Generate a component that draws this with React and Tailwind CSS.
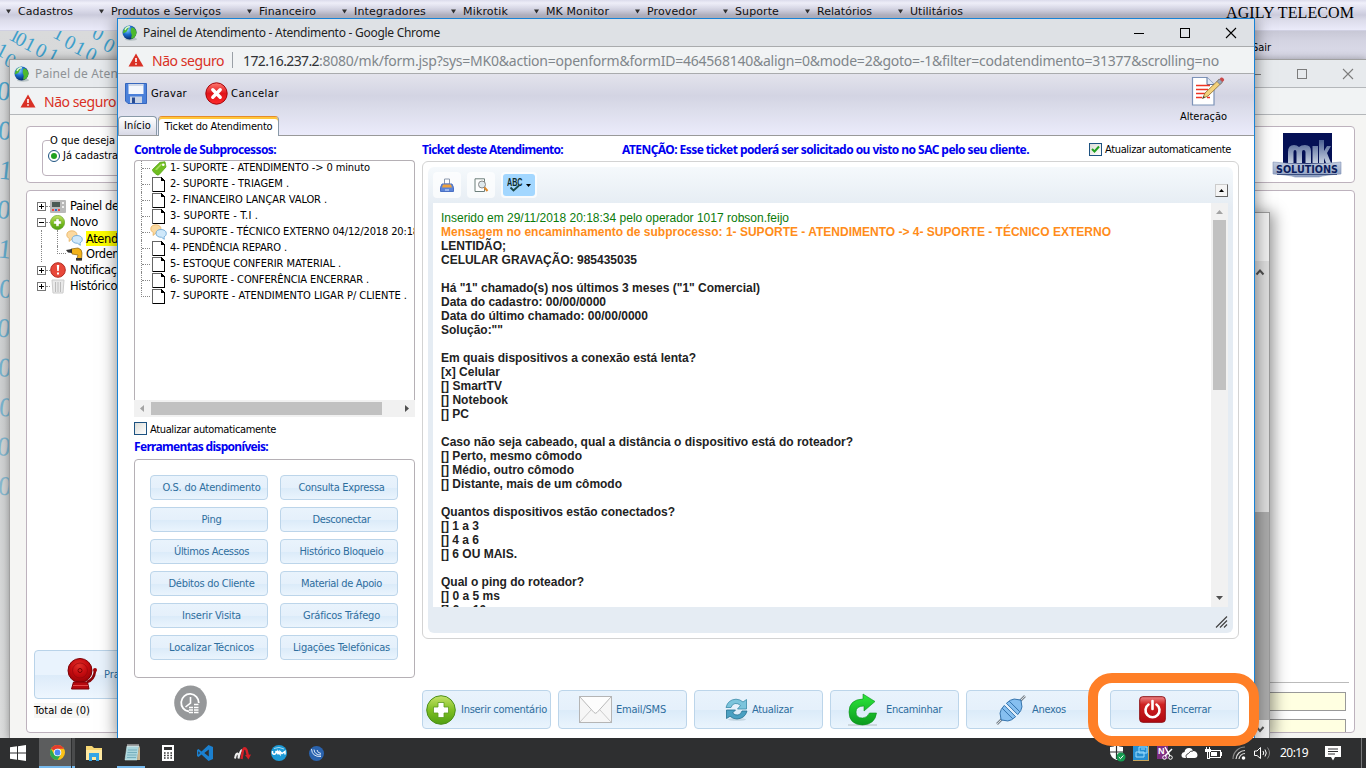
import React, { useLayoutEffect, useRef, useState } from "react";

const TAHOMA = "font-['DejaVu_Sans_Condensed','DejaVu_Sans',sans-serif] text-[11px]";
const TAHOMA_BOLD = "font-['Noto_Sans','Open_Sans',sans-serif] text-[12px] font-bold";
const VERDANA = "font-['DejaVu_Sans',sans-serif]";
const SEGOE = "font-['Noto_Sans','Open_Sans',sans-serif]";
const ARIAL = "font-['Liberation_Sans',Arial,sans-serif]";

/* Text tracked so that it fills exactly w pixels. */
function Fit({ w, className = "", children }) {
  const ref = useRef(null);
  const [track, setTrack] = useState(0);
  useLayoutEffect(() => {
    const natural = ref.current.getBoundingClientRect().width;
    setTrack((w - natural) / String(children).length);
  }, []);
  return (
    <span ref={ref} className={"inline-block whitespace-pre shrink-0 " + className} style={{ letterSpacing: track + "px" }}>
      {children}
    </span>
  );
}

const Globe = () => (
  <svg width="16" height="16" viewBox="0 0 16 16" className="shrink-0">
    <defs>
      <radialGradient id="gl" cx="35%" cy="30%" r="75%">
        <stop offset="0" stopColor="#8fd0ff" />
        <stop offset="0.45" stopColor="#1c6fd0" />
        <stop offset="1" stopColor="#04215e" />
      </radialGradient>
    </defs>
    <ellipse cx="9" cy="14.2" rx="6" ry="1.6" fill="#9aa" opacity="0.6" />
    <circle cx="7.5" cy="7.5" r="7" fill="url(#gl)" />
    <path d="M1 8.500C1 4 4 1 8 .8C7.500 2.500 6 3 5.500 5S3 7.500 1 8.500ZM9.500 2.500C12 2 14.500 5 14.500 8C14 11 12 13.500 9.500 14C8.500 12 10.500 10.500 9.500 9S8.500 5 9.500 2.500Z" fill="#4db82e" />
    <path d="M3 5C4 2.500 6 1.500 8 1.800" stroke="#fff" strokeWidth="1.300" fill="none" opacity="0.8" />
  </svg>
);

const Warn = () => (
  <svg width="16" height="14" viewBox="0 0 16 14" className="shrink-0">
    <path d="M8 0.500L15.500 13.500H0.500Z" fill="#d93025" />
    <path d="M7.200 5h1.600v4H7.200zM7.200 10.200h1.600v1.600H7.200z" fill="#fff" />
  </svg>
);

const WinButtons = ({ color }) => (
  <svg width="104" height="12" viewBox="0 0 104 12" className="shrink-0" fill="none" stroke={color} shapeRendering="crispEdges">
    <path d="M0 6.500H10" />
    <rect x="46.500" y="1.500" width="9" height="9" />
    <path d="M92 1L102 11M102 1L92 11" shapeRendering="auto" strokeWidth="1.100" />
  </svg>
);

const Bubbles = () => (
  <svg width="17" height="16" viewBox="0 0 17 16" className="shrink-0">
    <path d="M.8 5C.8 2 3 .8 6 .8S11 2.500 11 5S8.500 9 6 9L3 11.500L3.300 8.500C1.800 7.800 .8 6.500 .8 5Z" fill="#fbd9a0" stroke="#e9b25f" strokeWidth="0.800" />
    <path d="M6 9.300C6 6.800 8 5.500 11 5.500S16.300 7 16.300 9.400C16.300 11 15.300 12.300 14 12.800L14.300 15.300L11.500 13.300C8 13.300 6 11.800 6 9.300Z" fill="#cfe8fa" stroke="#6fa9d6" strokeWidth="0.900" />
  </svg>
);

const Page = () => (
  <svg width="14" height="16" viewBox="0 0 14 16" className="shrink-0" shapeRendering="crispEdges">
    <path d="M.5 15.500V1.500H9L12.500 5V15.500Z" fill="#fff" stroke="#666" />
    <path d="M9 1h1v1h1v1h1v1h1v12H1v-1h11V5H9Z" fill="#000" />
  </svg>
);

const Tag = () => (
  <svg width="15" height="15" viewBox="0 0 15 15" className="shrink-0">
    <path d="M.5 8.500L8 1.300L13 .8L14 6L7 13.700Q5.500 14.700 4 13.200L1 10.500Q.1 9.500 .5 8.500Z" fill="#6fbe20" stroke="#5aa61a" strokeWidth="0.800" />
    <path d="M3 8.500L8.500 3L11 2.500L5 9Z" fill="#a5dc5f" />
    <circle cx="11.300" cy="3.800" r="1.300" fill="#fff" />
  </svg>
);

const Expander = ({ open }) => (
  <svg width="9" height="9" viewBox="0 0 9 9" className="shrink-0" shapeRendering="crispEdges">
    <rect x=".5" y=".5" width="8" height="8" fill="#fff" stroke="#777" />
    <path d={open ? "M2 4.500H7" : "M2 4.500H7M4.500 2V7"} stroke="#000" />
  </svg>
);

const PlusBall = ({ s }) => (
  <svg width={s} height={s} viewBox="0 0 30 30" className="shrink-0">
    <defs>
      <linearGradient id="pb" x1="0" y1="0" x2="0" y2="1">
        <stop offset="0" stopColor="#c5e36a" />
        <stop offset="0.5" stopColor="#7fbf22" />
        <stop offset="1" stopColor="#4f9f12" />
      </linearGradient>
    </defs>
    <circle cx="15" cy="15" r="14.300" fill="url(#pb)" stroke="#4c8f1a" strokeWidth="1" />
    <path d="M12 7.500h6V12h4.500v6H18v4.500h-6V18H7.500v-6H12z" fill="#fff" stroke="#5b9a20" strokeWidth="0.800" />
  </svg>
);

const menu = [
  ["Cadastros", 6, 18, 55],
  ["Produtos e Serviços", 99, 111, 110],
  ["Financeiro", 247, 259, 57],
  ["Integradores", 342, 354, 72],
  ["Mikrotik", 451, 463, 45],
  ["MK Monitor", 534, 546, 63],
  ["Provedor", 635, 647, 50],
  ["Suporte", 723, 735, 44],
  ["Relatórios", 805, 817, 55],
  ["Utilitários", 898, 910, 53],
];

function TopBar() {
  return (
    <header className="w-[1366px]">
      <div className="flex h-[31px] items-start border-b border-[#d0d0e2] bg-[linear-gradient(#dcdcec_0px,#f0f0fa_3px,#dedeed_9px,#cbcbdc_15px,#dcdcea_20px,#ebebfa_30px)]">
        {menu.map(([t, ax, x, w], i) => {
          const prev = i ? menu[i - 1][2] + menu[i - 1][3] : 0;
          return (
            <div key={t} className="flex h-[25px] shrink-0 items-center" style={{ marginLeft: ax - prev }}>
              <span className="flex shrink-0 pb-[2px]" style={{ width: x - ax }}>
                <svg width="5" height="5" viewBox="0 0 5 5"><path d="M0 .5H5L2.500 4.500Z" fill="#333" /></svg>
              </span>
              <Fit w={w} className={VERDANA + " text-[11px] text-[#111]"}>{t}</Fit>
            </div>
          );
        })}
        <div className="ml-auto mr-3 flex h-[26px] items-center font-['Liberation_Serif',serif] text-[16px] text-black">
          <Fit w={128}>AGILY TELECOM</Fit>
        </div>
      </div>
      <div className="ml-[1240px] flex h-[28px] items-center bg-[linear-gradient(#c8c8d6,#d4d4e2_10px,#dcdcea)] pl-[12px]">
        <Fit w={19} className={TAHOMA + " pt-[6px] text-black"}>Sair</Fit>
      </div>
    </header>
  );
}

const binary = [
  [15, 5, "1"], [21, 9, "0"], [30, 14, "1"], [41, 20, "0"], [53, 25, "1"],
  [59, 3, "1"], [70, 12, "0"], [80, 18, "1"], [91, 24, "0"],
  [98, 3, "0"], [109, 15, "0"], [2, 20, "1"], [10, 30, "0"],
];
const stripDigits = ["0", "0", "1", "0", "1", "0", "0", "0", "0", "0", "0"];

function Wallpaper() {
  return (
    <svg width="120" height="707" viewBox="0 0 120 707" className="absolute left-0 top-[31px]">
      <defs>
        <linearGradient id="wp" x1="0" y1="0" x2="0" y2="1">
          <stop offset="0" stopColor="#d9dadb" />
          <stop offset="0.5" stopColor="#cdcfd0" />
          <stop offset="1" stopColor="#dcdddd" />
        </linearGradient>
      </defs>
      <rect width="120" height="707" fill="url(#wp)" />
      <g fontFamily="Liberation Serif, serif" textAnchor="middle" fill="#3f9fcb">
        {binary.map(([x, y, d], i) => (
          <text key={i} x={x} y={y + 6} transform={`rotate(27 ${x} ${y})`} fontSize="20">{d}</text>
        ))}
        {stripDigits.map((d, i) => (
          <text key={"s" + i} x={4 + (i % 3)} y={69 + i * 39.500} transform={`rotate(6 4 ${60 + i * 39.500})`} fontSize="27" opacity={0.9 - i * 0.04}>{d}</text>
        ))}
      </g>
    </svg>
  );
}

const Logo = () => (
  <svg width="70" height="46" viewBox="0 0 70 46" className="shrink-0">
    <defs>
      <linearGradient id="mk" x1="0" y1="0" x2="0" y2="1">
        <stop offset="0" stopColor="#4a5f92" />
        <stop offset="1" stopColor="#c5cfe0" />
      </linearGradient>
      <linearGradient id="mk2" x1="0" y1="0" x2="0" y2="1">
        <stop offset="0" stopColor="#c3cde0" />
        <stop offset="1" stopColor="#8b9cbe" />
      </linearGradient>
    </defs>
    <path d="M11 1H60V32H11Z" fill="#041055" />
    <path d="M16 31V20Q16 13 22 13Q25 13 27 15Q29 13 33 13Q39 13 39 19V31H33.500V20Q33.500 18 31.500 18Q30 18 30 20V31H24.500V20Q24.500 18 23 18Q21.500 18 21.500 20V31ZM40.500 14H46V31H40.500ZM47 8H52V19L55 14H59L55 21L59 31H54L52 26V31H47Z" fill="url(#mk)" />
    <path d="M1 30Q35 34 69 30V42Q52 43 47 45H23Q18 43 1 42Z" fill="url(#mk2)" stroke="#8292b5" strokeWidth="0.600" />
    <text x="35" y="40.500" textAnchor="middle" textLength="62" lengthAdjust="spacingAndGlyphs" fontFamily="DejaVu Sans, sans-serif" fontWeight="bold" fontSize="10" fill="#0b1c5c">SOLUTIONS</text>
    <path d="M5 42.500H65" stroke="#24386f" strokeWidth="0.800" />
  </svg>
);

const Bell = () => (
  <svg width="31" height="33" viewBox="0 0 31 33" className="shrink-0">
    <defs>
      <radialGradient id="bell" cx="45%" cy="30%" r="70%">
        <stop offset="0" stopColor="#e0302a" />
        <stop offset="0.5" stopColor="#c60c10" />
        <stop offset="1" stopColor="#9a0206" />
      </radialGradient>
    </defs>
    <path d="M28 13Q27 22 20 24" stroke="#8a0408" strokeWidth="2.500" fill="none" />
    <circle cx="28" cy="12" r="2" fill="#a3060a" />
    <circle cx="13" cy="12.500" r="12" fill="url(#bell)" stroke="#7c0206" />
    <circle cx="13" cy="12.500" r="7.500" fill="none" stroke="#8f060a" opacity="0.6" />
    <circle cx="13" cy="12.500" r="2" fill="#d81c1c" stroke="#700" />
    <path d="M6.500 24H20.500L22 31H4.500Z" fill="#b5090e" stroke="#7c0206" />
    <path d="M6 27.500H21" stroke="#e24a4a" />
  </svg>
);

function BackTree() {
  const row = "flex h-4 items-center";
  const txt = VERDANA + " text-[11.500px] tracking-[-0.400px] pt-px text-black whitespace-nowrap";
  const dots = <span className="w-[4px] shrink-0 border-t border-dotted border-[#888]" />;
  return (
    <div className="pl-[10px] pt-[7px]">
      <div className={row}>
        <Expander />{dots}
        <svg width="16" height="13" viewBox="0 0 16 13" className="shrink-0"><rect width="16" height="13" rx="1" fill="#b9b9b9" /><rect x="2" y="2" width="8" height="5" fill="#4a5a54" /><path d="M2 9h2v2H2zM8 9h2v2H8z" fill="#e44" /><path d="M5 9h2v2H5z" fill="#36c" /><path d="M12 2h2v2h-2zM12 6h2v2h-2z" fill="#eee" /></svg>
        <span className={txt + " ml-1"}>Painel de</span>
      </div>
      <div className={row}>
        <Expander open />{dots}<PlusBall s={15} />
        <span className={txt + " ml-[5px]"}>Novo</span>
      </div>
      <div className={row + " pl-[4px]"}>
        <span className="h-4 w-4 shrink-0 border-l border-dotted border-[#888]" />
        <span className="h-4 w-[9px] shrink-0 border-l border-dotted border-[#888]" />
        <Bubbles />
        <span className={txt + " ml-[3px] bg-[#ffff00] leading-[14px]"}>Atendimento</span>
      </div>
      <div className={row + " pl-[4px]"}>
        <span className="h-4 w-4 shrink-0 border-l border-dotted border-[#888]" />
        <span className="mb-2 h-2 w-[9px] shrink-0 border-b border-l border-dotted border-[#888]" />
        <svg width="17" height="14" viewBox="0 0 17 14" className="shrink-0"><path d="M5 2L12 1Q16 2 16 6L15.500 13H10.500L12 8L6 7Z" fill="#f2b21b" stroke="#8a6410" strokeWidth=".7" /><path d="M0 3L6 2V6L2 5.500ZM10 11h6v2.500h-6z" fill="#333" /></svg>
        <span className={txt + " ml-[3px]"}>Ordem</span>
      </div>
      <div className={row}>
        <Expander />{dots}
        <svg width="16" height="16" viewBox="0 0 16 16" className="shrink-0"><circle cx="8" cy="8" r="7.300" fill="#e8483a" stroke="#b42a20" /><path d="M6.800 3h2.400L8.800 9H7.200ZM7 10.500h2v2H7z" fill="#fff" /></svg>
        <span className={txt + " ml-1"}>Notificações</span>
      </div>
      <div className={row}>
        <Expander />{dots}
        <svg width="16" height="16" viewBox="0 0 16 16" className="shrink-0"><path d="M2 2H14L13 15H3Z" fill="#e9e9e9" stroke="#ccc" /><path d="M5.500 4V14M8 4V14M10.500 4V14" stroke="#bbb" /></svg>
        <span className={txt + " ml-1"}>Histórico</span>
      </div>
    </div>
  );
}

function BackWindow() {
  return (
    <section className="absolute left-[9px] top-[59px] flex h-[680px] w-[1358px] flex-col border border-[#a0a0a0] bg-[#f5f5f3] shadow-[0_0_8px_rgba(0,0,0,0.35)]">
      <div className="flex h-[28px] shrink-0 items-center border-b border-[#b4b7ba] bg-[#e7eaed] pl-[4px]">
        <Globe />
        <span className={SEGOE + " ml-[5px] text-[12px] tracking-[0.150px] text-[#8e9296]"}>Painel de Atendimento</span>
        <span className="ml-auto mr-[11px]"><WinButtons color="#7c7c7c" /></span>
      </div>
      <div className="flex h-[27px] shrink-0 items-center border-b border-[#b4b7ba] bg-[#f1f3f4] pl-[10px]">
        <Warn />
        <Fit w={72} className={SEGOE + " ml-[8px] text-[14px] text-[#d93025]"}>Não seguro</Fit>
      </div>
      <div className="ml-[16px] mt-[11px] flex h-[57px] w-[1329px] shrink-0 items-center justify-between rounded border border-[#bdb2bd] bg-white pr-[12px]">
        <fieldset className={TAHOMA + " ml-[15px] h-[43px] w-[300px] rounded border border-[#bdb2bd] px-[5px] text-black"}>
          <legend className="ml-[2px] h-[14px] leading-[16px]">O que deseja fazer?</legend>
          <div className="flex items-center gap-[3px] pt-px">
            <span className="flex size-[12px] items-center justify-center rounded-full border border-[#1d5281] bg-white"><span className="size-[6px] rounded-full bg-[#21a121]" /></span>
            Já cadastrado
          </div>
        </fieldset>
        <Logo />
      </div>
      <div className="ml-[16px] mt-[7px] flex h-[543px] w-[1329px] shrink-0 rounded border border-[#bdb2bd] bg-white">
        <div className="flex h-full flex-1 flex-col">
          <BackTree />
          <div className="ml-[7px] mt-auto flex h-[49px] w-[150px] items-center rounded border border-[#b9d3e9] bg-[linear-gradient(#e9f3fd_50%,#dcebf9_50%,#eef6fe)] pl-[32px]">
            <Bell />
            <span className={TAHOMA + " ml-[6px] pt-px text-[#2e6e9e]"}>Pratica</span>
          </div>
          <div className="mb-[14px] ml-[7px] mt-[4px] flex h-[15px]"><Fit w={56} className={TAHOMA + " bg-[#f7f7f5] text-black leading-[16px]"}>Total de (0)</Fit></div>
        </div>
        <div className="flex h-full w-[112px] flex-col justify-end">
          <div className="mr-[5px] border-t border-[#bbb]" />
          <div className="mr-[8px] mt-[9px] h-[19px] border border-[#999] bg-[#ffffe1]" />
          <div className="mr-[8px] mt-[8px] h-[13px] border border-b-0 border-[#999] bg-[#ffffe1]" />
        </div>
      </div>
    </section>
  );
}

function SidePopup() {
  return (
    <section className="absolute left-[1200px] top-[212px] flex h-[527px] w-[70px] flex-col border border-[#9a9a9a] bg-[#f0f0f0] shadow-[4px_0_14px_rgba(0,0,0,0.4)]">
      <div className="h-[48px] shrink-0" />
      <div className="flex h-[459px] shrink-0 flex-col items-end bg-[#dedede]">
        <svg width="14" height="22" viewBox="0 0 14 22"><path d="M1.500 13.500L5 9.500L8.500 13.500" stroke="#505050" strokeWidth="2" fill="none" /></svg>
        <div className="mt-auto h-[208px] w-[14px] bg-[#ababab]" />
      </div>
      <div className="flex justify-end"><svg width="14" height="18" viewBox="0 0 14 18"><path d="M1.500 7L5 11L8.500 7" stroke="#505050" strokeWidth="2" fill="none" /></svg></div>
    </section>
  );
}

const Floppy = () => (
  <svg width="22" height="21" viewBox="0 0 22 21" className="shrink-0">
    <path d="M.5.5H21.500V20.500H3L.5 18Z" fill="#4a80da" stroke="#3566bd" />
    <path d="M3.500 1H18.500V11H3.500Z" fill="#f4f7fc" />
    <path d="M4 1H18V3H4Z" fill="#cfd8e8" />
    <path d="M5 13.500H17V20H5Z" fill="#c9d3e4" />
    <path d="M7 14.500H10V20H7Z" fill="#2a4c93" />
  </svg>
);

const CancelBall = () => (
  <svg width="23" height="23" viewBox="0 0 23 23" className="shrink-0">
    <defs>
      <linearGradient id="cb" x1="0" y1="0" x2="0" y2="1">
        <stop offset="0" stopColor="#ff7a70" />
        <stop offset="0.5" stopColor="#e0141a" />
        <stop offset="1" stopColor="#ff2a2a" />
      </linearGradient>
    </defs>
    <circle cx="11.500" cy="11.500" r="10.700" fill="url(#cb)" stroke="#a3060c" />
    <path d="M7.800 7.800L15.200 15.200M15.200 7.800L7.800 15.200" stroke="#fff" strokeWidth="3.400" strokeLinecap="round" />
  </svg>
);

const EditDoc = () => (
  <svg width="34" height="31" viewBox="0 0 34 31" className="shrink-0">
    <path d="M1.500 1.500H16L23 8.500V29H1.500Z" fill="#fff" stroke="#7d93b8" strokeWidth="1.200" />
    <path d="M16 1.500V8.500H23" fill="#dfe8f5" stroke="#5d759e" />
    <path d="M5 9.500H19M5 13.500H17M5 17.500H14M5 21.500H11M16 21.500H19" stroke="#ee3524" strokeWidth="1.400" />
    <path d="M11.500 22.500L14 17L28 3.500L31 6.500L17 20Z" fill="#f3d27c" stroke="#8a6a2c" strokeWidth="0.800" />
    <path d="M26 5.500L28.500 3L31.500 6L29 8.500Z" fill="#9aa7bb" stroke="#556" strokeWidth=".5" />
    <path d="M28.500 3L30 1.500Q31.500 1 32.500 2.500Q33.500 3.500 33 4.500L31.500 6Z" fill="#c94848" />
    <path d="M11.500 22.500L12.700 20L14 21.300Z" fill="#333" />
  </svg>
);

const Check = ({ on }) => (
  <span className="flex size-[13px] shrink-0 items-center justify-center border border-[#1d5281] bg-[linear-gradient(135deg,#dcdcd7,#fff)]">
    {on && <svg width="9" height="9" viewBox="0 0 9 9"><path d="M1 4L3.500 6.500L8 1.500" stroke="#21a121" strokeWidth="2" fill="none" /></svg>}
  </span>
);

const subprocesses = [
  ["1- SUPORTE - ATENDIMENTO -> 0 minuto", 200, "tag"],
  ["2- SUPORTE - TRIAGEM .", 119, "page"],
  ["2- FINANCEIRO LANÇAR VALOR .", 157, "page"],
  ["3- SUPORTE - T.I .", 88, "page"],
  ["4- SUPORTE - TÉCNICO EXTERNO 04/12/2018 20:18", 249, "chat"],
  ["4- PENDÊNCIA REPARO .", 117, "page"],
  ["5- ESTOQUE CONFERIR MATERIAL .", 171, "page"],
  ["6- SUPORTE - CONFERÊNCIA ENCERRAR .", 199, "page"],
  ["7- SUPORTE - ATENDIMENTO LIGAR P/ CLIENTE .", 237, "page"],
];

const tools = [
  ["O.S. do Atendimento", 98], ["Consulta Expressa", 86],
  ["Ping", 20], ["Desconectar", 58],
  ["Últimos Acessos", 75], ["Histórico Bloqueio", 84],
  ["Débitos do Cliente", 86], ["Material de Apoio", 81],
  ["Inserir Visita", 59], ["Gráficos Tráfego", 77],
  ["Localizar Técnicos", 85], ["Ligações Telefônicas", 97],
];

const BTN = "border border-[#bcd5ea] rounded bg-[linear-gradient(#e9f3fc_0%,#e5f0fb_50%,#dbebf9_52%,#eaf4fd_100%)]";

const Blue = ({ w, children, className = "" }) => (
  <Fit w={w} className={TAHOMA_BOLD + " text-[#0000f0] leading-[14px] " + className}>{children}</Fit>
);

function LeftColumn() {
  return (
    <div className="flex w-[281px] shrink-0 flex-col">
      <div className="flex h-[14px]"><Blue w={142}>Controle de Subprocessos:</Blue></div>
      <div className="mt-[3px] h-[240px] overflow-hidden rounded-t border border-b-0 border-[#b5b0b5] bg-white pl-[6px]">
        <div className="-mt-px">
          {subprocesses.map(([t, w, kind], i) => (
            <div key={t} className="flex h-4 w-[400px] items-center">
              <span className={(i === 8 ? "mb-[7px] h-[9px] border-b" : "h-4") + " w-[9px] shrink-0 border-l border-dotted border-[#888]"}>
                {i !== 8 && <span className="block h-[9px] border-b border-dotted border-[#888]" />}
              </span>
              <span className={"flex w-[20px] shrink-0 " + (kind === "chat" ? "" : "pl-[2px]")}>
                {kind === "tag" ? <Tag /> : kind === "chat" ? <Bubbles /> : <Page />}
              </span>
              <Fit w={w} className={TAHOMA + " text-black"}>{t}</Fit>
            </div>
          ))}
        </div>
      </div>
      <div className="flex h-[17px] items-center bg-[#f1f1f1]">
        <svg width="17" height="17" viewBox="0 0 17 17"><path d="M10 5V12L6 8.500Z" fill="#a3a3a3" /></svg>
        <div className="h-[13px] w-[231px] bg-[#c1c1c1]" />
        <svg width="17" height="17" viewBox="0 0 17 17" className="ml-auto"><path d="M7 5V12L11 8.500Z" fill="#505050" /></svg>
      </div>
      <div className="mt-[5px] flex h-[13px] items-center gap-[3px]"><Check /><Fit w={126} className={TAHOMA + " pt-[2px] text-black leading-[14px]"}>Atualizar automaticamente</Fit></div>
      <div className="mt-[5px] flex h-[14px]"><Blue w={134}>Ferramentas disponíveis:</Blue></div>
      <div className="mt-[5px] h-[219px] rounded border border-[#b5b0b5] px-[15px] pt-[15px]">
        <div className="grid grid-cols-[118px_118px] gap-x-3 gap-y-[7px]">
          {tools.map(([t, w]) => (
            <div key={t} className={BTN + " flex h-[25px] items-center justify-center pl-[5px] pt-[2px]"}>
              <Fit w={w} className={TAHOMA + " text-[#2e6e9e]"}>{t}</Fit>
            </div>
          ))}
        </div>
      </div>
      <div className="ml-[40px] mt-[7px]">
        <svg width="33" height="36" viewBox="0 0 33 36">
          <ellipse cx="16.500" cy="18" rx="16.300" ry="17.500" fill="#96989a" />
          <path d="M15 26.500A8.800 8.800 0 1 1 24.800 18" fill="none" stroke="#fff" strokeWidth="1.800" />
          <path d="M16.500 12V18L11.500 22" stroke="#fff" strokeWidth="1.600" fill="none" />
          <path d="M15 22.500h4M15 25h4M15 27.500h4M20 19.500h4.500M20 22.500h4.500M20 25h4.500M20 27.500h4.500" stroke="#fff" strokeWidth="1.700" />
        </svg>
      </div>
    </div>
  );
}

const ticket = [
  ["LENTIDÃO;", 65], ["CELULAR GRAVAÇÃO: 985435035", 196], null,
  ['Há "1" chamado(s) nos últimos 3 meses ("1" Comercial)', 319],
  ["Data do cadastro: 00/00/0000", 165], ["Data do último chamado: 00/00/0000", 207], ['Solução:""', 62], null,
  ["Em quais dispositivos a conexão está lenta?", 255], ["[x] Celular", 59], ["[] SmartTV", 61], ["[] Notebook", 67], ["[] PC", 28], null,
  ["Caso não seja cabeado, qual a distância o dispositivo está do roteador?", 412],
  ["[] Perto, mesmo cômodo", 141], ["[] Médio, outro cômodo", 133], ["[] Distante, mais de um cômodo", 181], null,
  ["Quantos dispositivos estão conectados?", 234], ["[] 1 a 3", 38], ["[] 4 a 6", 38], ["[] 6 OU MAIS.", 76], null,
  ["Qual o ping do roteador?", 143], ["[] 0 a 5 ms", 59], ["[] 6 a 10 ms", 66],
];

function Editor() {
  return (
    <div className="mt-[4px] h-[478px] w-[817px] rounded-md border border-[#d3d3d3] bg-white p-[5px]">
      <div className="flex h-[466px] flex-col rounded-md bg-[linear-gradient(#f5f9fc_0px,#e5ecf3_40px)] px-[5px]">
        <div className="flex h-[36px] shrink-0 pt-[5px]">
          <div className="flex h-[26px] w-[28px] items-center justify-center rounded bg-white/70">
            <svg width="14" height="15" viewBox="0 0 14 15"><path d="M4.500 1H9.500V6H4.500Z" fill="#fff" stroke="#8a98ad" /><path d="M2 6H12L13.500 9.500V13.500H.5V9.500Z" fill="#5b84d8" stroke="#4a70c4" /><path d="M3 6.500H11L12 9.500H2Z" fill="#f0a23c" /><path d="M5 12H9" stroke="#dce8ff" /></svg>
          </div>
          <div className="ml-[6px] flex h-[26px] w-[28px] items-center justify-center rounded bg-white/70">
            <svg width="15" height="15" viewBox="0 0 15 15"><path d="M1 .8H10.500V13.500H1Z" fill="#fff" stroke="#6d7f7b" /><circle cx="8" cy="6.500" r="3.500" fill="#dfe9ee" stroke="#888" /><path d="M10.500 9.500L13.500 13" stroke="#e0892a" strokeWidth="2" /></svg>
          </div>
          <div className="ml-[6px] flex h-[26px] w-[36px] items-center justify-center rounded bg-white/70">
            <div className="flex h-[22px] w-[32px] items-center justify-center gap-[3px] rounded-[3px] bg-[#a3d7ff]">
              <svg width="16" height="14" viewBox="0 0 16 14"><text x="0" y="7.500" textLength="15.500" lengthAdjust="spacingAndGlyphs" fontFamily="Liberation Sans, sans-serif" fontWeight="bold" fontSize="10" fill="#0f2c2c">ABC</text><path d="M3.500 9.500L6.500 12.500L12 7.500" stroke="#1b4a4a" strokeWidth="1.800" fill="none" /></svg>
              <svg width="5" height="3" viewBox="0 0 5 3"><path d="M0 0H5L2.500 3Z" fill="#000" /></svg>
            </div>
          </div>
          <div className="ml-auto mt-[12px] flex size-[13px] items-center justify-center border border-[#666] border-l-[#ccc] border-t-[#ccc] bg-[#f4f4f4]">
            <svg width="5" height="3" viewBox="0 0 5 3"><path d="M0 3H5L2.500 0Z" fill="#000" /></svg>
          </div>
        </div>
        <div className="flex h-[404px] shrink-0 bg-white">
          <div className={ARIAL + " h-[404px] flex-1 overflow-hidden pl-[8px] pt-[8px] text-[12px] font-bold leading-[14px] text-[#222]"}>
            <div className="h-[14px] font-normal text-[#0a7a0a]"><Fit w={348}>Inserido em 29/11/2018 20:18:34 pelo operador 1017 robson.feijo</Fit></div>
            <div className="h-[14px] text-[#ff8c1a]"><Fit w={670}>{"Mensagem no encaminhamento de subprocesso: 1- SUPORTE - ATENDIMENTO -> 4- SUPORTE - TÉCNICO EXTERNO"}</Fit></div>
            {ticket.map((l, i) => (
              <div key={i} className="h-[14px]">{l && <Fit w={l[1]}>{l[0]}</Fit>}</div>
            ))}
          </div>
          <div className="flex w-[17px] flex-col items-center bg-[#f1f1f1]">
            <svg width="17" height="17" viewBox="0 0 17 17"><path d="M5 11H12L8.500 7Z" fill="#a3a3a3" /></svg>
            <div className="h-[170px] w-[13px] bg-[#c1c1c1]" />
            <svg width="17" height="17" viewBox="0 0 17 17" className="mt-auto"><path d="M5 6H12L8.500 10Z" fill="#505050" /></svg>
          </div>
        </div>
        <svg width="13" height="13" viewBox="0 0 13 13" className="ml-auto mt-[8px]"><path d="M1 12.500L12 1.500M5 12.500L12 5.500M9 12.500L12 9.500" stroke="#444" strokeWidth="1.200" /></svg>
      </div>
    </div>
  );
}

const Envelope = () => (
  <svg width="33" height="27" viewBox="0 0 33 27" className="shrink-0">
    <rect x=".5" y=".5" width="32" height="26" fill="#f6f6f6" stroke="#b5b5b5" />
    <path d="M1 26L12 14M32 26L21 14" stroke="#ccc" fill="none" />
    <path d="M1 1L15 16.500Q16.500 18 18 16.500L32 1" fill="#fdfdfd" stroke="#b9b9b9" />
  </svg>
);
const Refresh = () => (
  <svg width="23" height="23" viewBox="0 0 23 23" className="shrink-0">
    <ellipse cx="12" cy="21.500" rx="9" ry="1.300" fill="#c4d6e2" />
    <path d="M1 9.500Q3 1.500 11 1.200Q15 1.200 18 4L21.500 1.500V11H12.500L15.500 7.500Q13 5 10 5.500Q7 6 6 9.500Z" fill="#7cc4dc" stroke="#3a8aa8" strokeWidth=".8" />
    <path d="M22 13Q20 20.500 12 21Q8 21 5 18.300L1.500 20.500V12H10.500L7.500 15Q10 17.500 13 17Q16 16.500 17 13Z" fill="#4aa0c2" stroke="#22708f" strokeWidth=".8" />
  </svg>
);
const Forward = () => (
  <svg width="32" height="34" viewBox="0 0 32 34" className="shrink-0">
    <defs><linearGradient id="fw" x1="0" y1="0" x2="0" y2="1"><stop offset="0" stopColor="#2ee83c" /><stop offset="1" stopColor="#0a9a1e" /></linearGradient></defs>
    <path d="M1 32H30" stroke="#c4cfd6" strokeWidth="1.500" />
    <path d="M16 1L28 8.500L17 18V13Q9 13 9 19Q9 25 15.500 25Q20 25 22.500 20H29.500Q28 31.500 15.500 32Q2 31.500 2 19Q2 6.500 16 6Z" fill="url(#fw)" stroke="#0c8f1c" strokeWidth=".6" />
  </svg>
);
const Plug = () => (
  <svg width="30" height="30" viewBox="0 0 30 30" className="shrink-0">
    <path d="M1 29L7 23M23 7L29 1" stroke="#7d8790" strokeWidth="2.600" />
    <path d="M1 29L7 23M23 7L29 1" stroke="#d5dade" strokeWidth="1" />
    <g transform="rotate(-45 15 15)" fill="#86bff0" stroke="#2f6fa9" strokeWidth=".9">
      <path d="M1 15L5 9.500Q8 7 13.500 7V23Q8 23 5 20.500Z" />
      <path d="M29 15L25 9.500Q22 7 16.500 7V23Q22 23 25 20.500Z" />
      <path d="M10 7.500V22.500M20 7.500V22.500" />
    </g>
  </svg>
);
const Power = () => (
  <svg width="27" height="27" viewBox="0 0 27 27" className="shrink-0">
    <defs><linearGradient id="pw" x1="0" y1="0" x2="0" y2="1"><stop offset="0" stopColor="#e88" /><stop offset=".3" stopColor="#cf2222" /><stop offset="1" stopColor="#b00810" /></linearGradient></defs>
    <rect x=".7" y=".7" width="25.600" height="25.600" rx="3" fill="url(#pw)" stroke="#8f1014" />
    <path d="M9.500 8.500A7 7 0 1 0 17.500 8.500" fill="none" stroke="#fff" strokeWidth="2.600" strokeLinecap="round" />
    <path d="M13.500 5V13" stroke="#fff" strokeWidth="2.600" strokeLinecap="round" />
  </svg>
);

function Action({ icon, pad, gap, w, label, className = "" }) {
  return (
    <div className={BTN + " flex h-[39px] w-[129px] shrink-0 items-center " + pad + " " + className}>
      {icon}
      <Fit w={w} className={TAHOMA + " pt-[2px] text-[#2e6e9e] " + gap}>{label}</Fit>
    </div>
  );
}

function MainWindow() {
  return (
    <section className="absolute left-[117px] top-[18px] flex h-[721px] w-[1138px] flex-col border border-[#1883d7] bg-white shadow-[0_2px_16px_rgba(0,0,0,0.5)]">
      <div className="flex h-[28px] shrink-0 items-center border-b border-[#a9abad] bg-[#dee1e5] pl-[4px]">
        <Globe />
        <Fit w={297} className={SEGOE + " ml-[5px] text-[12px] text-[#222]"}>Painel de Atendimento - Atendimento - Google Chrome</Fit>
        <span className="ml-auto mr-[16px]"><WinButtons color="#000" /></span>
      </div>
      <div className="flex h-[27px] shrink-0 items-center border-b border-[#a9abad] bg-[#f1f3f4] pl-[10px]">
        <Warn />
        <Fit w={72} className={SEGOE + " ml-[8px] text-[14px] text-[#d93025]"}>Não seguro</Fit>
        <span className="ml-[8px] mr-[10px] h-4 w-px bg-[#9aa0a6]" />
        <Fit w={76} className={SEGOE + " text-[14px] text-[#303236]"}>172.16.237.2</Fit>
        <Fit w={900} className={SEGOE + " text-[14px] text-[#80868b]"}>:8080/mk/form.jsp?sys=MK0&action=openform&formID=464568140&align=0&mode=2&goto=-1&filter=codatendimento=31377&scrolling=no</Fit>
      </div>
      <div className="flex h-[62px] shrink-0 justify-between border-b border-[#999] bg-[linear-gradient(#e3e3ec_0px,#d3d4e3_22px,#dcddeb_36px,#ebebfb_61px)]">
        <div className="flex flex-col justify-between">
          <div className="flex h-[38px] items-center pl-[7px]">
            <Floppy />
            <Fit w={36} className={VERDANA + " ml-[4px] text-[10px] text-black"}>Gravar</Fit>
            <span className="ml-[18px] flex"><CancelBall /></span>
            <Fit w={48} className={VERDANA + " ml-[3px] text-[10px] text-black"}>Cancelar</Fit>
          </div>
          <div className="-mb-px flex items-end">
            <div className="mb-px flex h-[19px] w-[39px] items-center justify-center rounded-t border border-b-0 border-[#8a9aa8] bg-[linear-gradient(#fff,#d8d9e6)] pt-px"><Fit w={27} className={TAHOMA + " text-black"}>Início</Fit></div>
            <div className="ml-[1px] flex h-[20px] w-[121px] items-center justify-center rounded-t border border-b-0 border-[#8a9aa8] border-t-[#e68b2c] bg-white pt-[2px] shadow-[inset_0_2px_0_#ffc73c]"><Fit w={108} className={TAHOMA + " text-black"}>Ticket do Atendimento</Fit></div>
          </div>
        </div>
        <div className="mr-[27px] flex flex-col items-center pt-[2px]">
          <span className="ml-[9px]"><EditDoc /></span>
          <Fit w={47} className={TAHOMA + " mt-[3px] text-black leading-[14px]"}>Alteração</Fit>
        </div>
      </div>
      <div className="flex pl-[16px] pt-[7px]">
        <LeftColumn />
        <div className="ml-[7px] flex w-[840px] flex-col">
          <div className="flex h-[14px] w-[809px] items-center">
            <Blue w={141}>Ticket deste Atendimento:</Blue>
            <Blue w={407} className="ml-[59px]">ATENÇÃO: Esse ticket poderá ser solicitado ou visto no SAC pelo seu cliente.</Blue>
            <span className="-mt-[2px] ml-auto flex items-center gap-[3px]"><Check on /><Fit w={126} className={TAHOMA + " pt-[2px] text-black leading-[14px]"}>Atualizar automaticamente</Fit></span>
          </div>
          <Editor />
          <div className="mt-[51px] flex gap-[7px]">
            <Action icon={<PlusBall s={30} />} pad="pl-[3px]" gap="ml-[5px]" w={86} label="Inserir comentário" />
            <Action icon={<Envelope />} pad="pl-[20px]" gap="ml-[4px]" w={50} label="Email/SMS" />
            <Action icon={<Refresh />} pad="pl-[30px]" gap="ml-[4px]" w={41} label="Atualizar" />
            <Action icon={<Forward />} pad="pl-[16px]" gap="ml-[7px]" w={56} label="Encaminhar" />
            <Action icon={<Plug />} pad="pl-[29px]" gap="ml-[6px]" w={34} label="Anexos" />
            <Action icon={<Power />} pad="pl-[28px]" gap="ml-[5px]" w={40} label="Encerrar" className="ml-[8px]" />
          </div>
        </div>
      </div>
    </section>
  );
}

function Taskbar() {
  return (
    <footer className="absolute bottom-0 left-0 flex h-[30px] w-[1366px] items-center bg-[#2e2f30]">
      <svg width="16" height="16" viewBox="0 0 16 16" className="ml-[10px]"><path d="M0 2.300L7 1.300V7.500H0ZM8 1.200L16 0V7.500H8ZM0 8.500H7V14.700L0 13.700ZM8 8.500H16V16L8 14.800Z" fill="#fff" /></svg>
      <div className="ml-[13px] flex h-[30px] w-[32px] items-center justify-center border-b-2 border-[#76b9ed] bg-[#5c5d5e] pl-[4px]">
        <svg width="15" height="15" viewBox="0 0 16 16"><circle cx="8" cy="8" r="8" fill="#fbc116" /><path d="M8 8L1.070 4A8 8 0 0 1 14.930 4H8Z" fill="#e33b2e" /><path d="M1.070 4A8 8 0 0 0 8 16L11.500 10L8 8L4.500 10Z" fill="#2da94f" /><circle cx="8" cy="8" r="4" fill="#fff" /><circle cx="8" cy="8" r="3.100" fill="#4a8af4" /></svg>
      </div>
      <div className="ml-px h-[30px] w-[3px] border-b-2 border-[#76b9ed] bg-[#4a4b4c]" />
      <svg width="17" height="15" viewBox="0 0 17 15" className="ml-[11px]"><path d="M0 0H6L8 2H16V14H0Z" fill="#f7d774" /><path d="M0 4H16V14H0Z" fill="#ffe9a2" /><path d="M3 7H13V15H10V11H6V15H3Z" fill="#35a5e5" /></svg>
      <div className="ml-[14px] flex h-[30px] w-[28px] items-center justify-center border-b-2 border-[#76b9ed] pl-px">
        <svg width="16" height="17" viewBox="0 0 16 17"><path d="M3 2H15L13 16H1Z" fill="#a9d5dc" stroke="#dff" strokeWidth=".5" /><path d="M13 16L15 2L16 4V16Z" fill="#c9b38d" /><path d="M4 6H13M3.500 8.500H13M3 11H12.500M3 13.500H12" stroke="#5f9fb0" strokeWidth=".7" /><path d="M4 0V3M6 0V3M8 0V3M10 0V3M12 0V3M14 0V3" stroke="#ddd" /></svg>
      </div>
      <svg width="12" height="16" viewBox="0 0 12 16" className="ml-[17px]"><path d="M0 0H12V16H0Z" fill="#fff" /><path d="M2 2H10V5H2Z" fill="#333" /><path d="M2 8H10M2 10.500H10M2 13H10" stroke="#333" strokeWidth="1.400" strokeDasharray="1.600 1.600" /></svg>
      <svg width="16" height="16" viewBox="0 0 16 16" className="ml-[23px]"><path d="M11.500 0L16 2V14L11.500 16L4.500 9.500L1.500 12L0 11V5L1.500 4L4.500 6.500ZM11.800 4.500L7.300 8L11.800 11.500ZM1.300 6.300V9.700L3 8Z" fill="#1b80cf" fillRule="evenodd" /></svg>
      <svg width="17" height="13" viewBox="0 0 17 13" className="ml-[21px]"><path d="M1 11.500Q2 6 3.500 6.500Q5 7 4.500 11.500Q6 4 8 3" stroke="#eee" strokeWidth="2" fill="none" /><path d="M7.500 12L9 3Q10.500 -.5 12.500 3L14 9" stroke="#d61f26" strokeWidth="2.400" fill="none" /><path d="M11 8L17 7.500L14.500 12.500Z" fill="#d61f26" /></svg>
      <svg width="16" height="16" viewBox="0 0 16 16" className="ml-[20px]"><circle cx="8" cy="8" r="8" fill="#1c9ad6" /><path d="M1.500 6V8Q3 10.500 5 8V6.500Q6.500 6 7 9.500V6.500L9 9V6.500L11 8.500L14 6.500V9.500" stroke="#fff" strokeWidth="1.500" fill="none" /><path d="M3 3.500Q8 1 13 4" stroke="#fff" fill="none" opacity=".6" /></svg>
      <svg width="15" height="15" viewBox="0 0 15 15" className="ml-[22px]"><circle cx="7.500" cy="7.500" r="7.500" fill="#2a63ae" /><path d="M2.500 3Q3 11 12 10.500M5 3.500Q5.500 9 12 9M8 4Q8.500 7 12 7.500" stroke="#dce9fa" strokeWidth="1" fill="none" /></svg>
      <svg width="17" height="17" viewBox="0 0 17 17" className="ml-auto"><path d="M1 2Q5 2 7.500 0Q10 2 14 2V7Q14 12 7.500 15Q1 12 1 7Z" fill="#fff" /><path d="M7.500 1V14M1 7H14" stroke="#2e2f30" strokeWidth="1.200" /><circle cx="12" cy="12" r="4.500" fill="#149a50" /><path d="M9.800 12L11.500 13.700L14.300 10.500" stroke="#fff" fill="none" /></svg>
      <svg width="16" height="16" viewBox="0 0 16 16" className="ml-[7px]"><path d="M0 0H16V16H0Z" fill="#258ed2" /><path d="M3 7H11V12H3ZM6 2H14V8H6ZM8 4H12" stroke="#9bdcff" fill="none" /><path d="M0 15.500H16M15.500 0V16" stroke="#c8a45a" /></svg>
      <svg width="16" height="16" viewBox="0 0 16 16" className="ml-[8px]"><path d="M0 1H11V14H0Z" fill="#7d2f83" /><text x="1" y="9" fontFamily="Liberation Sans, sans-serif" fontSize="9" fontWeight="bold" fill="#fff">N</text><path d="M8 2L13 11M15 4L8 11" stroke="#fff" strokeWidth="1.500" /><circle cx="7.500" cy="12.500" r="1.800" stroke="#fff" fill="none" /><circle cx="13.500" cy="12.500" r="1.800" stroke="#fff" fill="none" /></svg>
      <svg width="17" height="12" viewBox="0 0 17 12" className="ml-[8px]"><path d="M4 11Q0 11 .5 7.500Q1 5 3.500 5Q4 1 8 1Q11 .8 12 4Q16 4 16.500 8Q16.500 11 13.500 11Z" fill="#fff" /><path d="M5.500 11Q4 7.500 7.500 6.500Q9 3.500 12 4" stroke="#2e2f30" fill="none" strokeWidth=".9" /></svg>
      <svg width="17" height="14" viewBox="0 0 17 14" className="ml-[7px]" shapeRendering="crispEdges"><path d="M4.500 4.500H15.500V11.500H4.500Z" fill="none" stroke="#fff" /><path d="M6 6H12V10H6ZM16 6H17V10H16ZM1 1h1v2H1zM4 1h1v2H4zM0 3h6v3H0z" fill="#fff" /><path d="M2.500 6V12.500H5" stroke="#fff" fill="none" /></svg>
      <svg width="14" height="14" viewBox="0 0 14 14" className="ml-[10px]" fill="none"><path d="M1 13A12 12 0 0 1 13 1" stroke="#888" strokeWidth="1.200" /><path d="M4 13A9 9 0 0 1 13 4.500M7 13A6 6 0 0 1 13 7.500" stroke="#ddd" strokeWidth="1.200" /><circle cx="11.500" cy="12" r="1.800" fill="#fff" /></svg>
      <svg width="17" height="14" viewBox="0 0 17 14" className="ml-[8px]" fill="none" stroke="#fff"><path d="M.5 5H3L6.500 1.500V12.500L3 9.500H.5Z" /><path d="M9 5Q10.500 7 9 9M11 3.500Q13.500 7 11 10.500" /><path d="M13.500 1.500Q17.500 7 13.500 12.500" stroke="#888" /></svg>
      <Fit w={28} className={SEGOE + " ml-[9px] text-[12px] text-white"}>20:19</Fit>
      <svg width="16" height="16" viewBox="0 0 16 16" className="ml-[17px]"><path d="M0 1H16V12H10L8 15.500L6 12H0Z" fill="#fff" /><path d="M3 4H13M3 6.500H13M3 9H10" stroke="#2e2f30" /></svg>
      <span className="ml-[20px] mr-[4px] h-[30px] w-px bg-[#77787a]" />
    </footer>
  );
}

export default function App() {
  return (
    <main className="relative h-[768px] w-[1366px] overflow-hidden bg-[#d5d7d8]">
      <Wallpaper />
      <div className="relative"><TopBar /></div>
      <BackWindow />
      <SidePopup />
      <MainWindow />
      <Taskbar />
      <div className="absolute left-[1088px] top-[673px] h-[73px] w-[171px] rounded-[24px] border-[10px] border-[#ff7f27]" />
    </main>
  );
}
